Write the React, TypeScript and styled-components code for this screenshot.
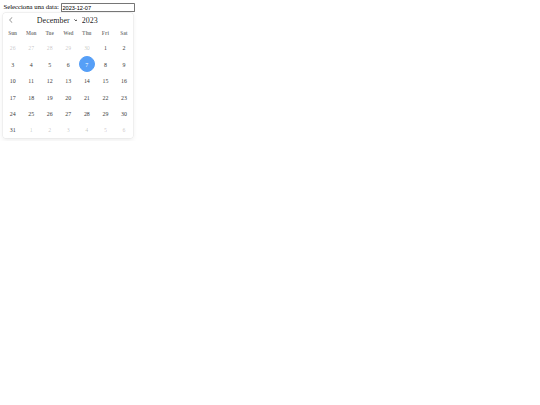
import React from "react";
import styled, { createGlobalStyle, css } from "styled-components";

const GlobalStyle = createGlobalStyle`
  body {
    margin: 0;
    background: #fff;
    color: #000;
  }
`;

// The picker is drawn at its natural size and shrunk as a whole
const Page = styled.div`
  zoom: 0.421875;
  padding: 8px;
  font-family: "Liberation Serif", "Times New Roman", serif;
  font-size: 16px;
`;

const Field = styled.label`
  display: inline;
`;

const DateInput = styled.input`
  font-family: "Liberation Sans", Arial, sans-serif;
  font-size: 13.333px;
  padding: 1px 2px;
  border: 1px solid #767676;
  border-radius: 2px;
  width: 168px;
`;

const Calendar = styled.div`
  display: block;
  margin-top: 2px;
  width: 307.875px;
  box-sizing: border-box;
  background: #fff;
  border-radius: 5px;
  box-shadow: 1px 0 0 #e6e6e6, -1px 0 0 #e6e6e6, 0 1px 0 #e6e6e6,
    0 -1px 0 #e6e6e6, 0 3px 13px rgba(0, 0, 0, 0.08);
  font-size: 14px;
  line-height: 24px;
  text-align: center;
`;

const MonthBar = styled.div`
  display: grid;
  grid-template-columns: 34px 1fr 34px;
  height: 34px;
  line-height: 1;
  color: rgba(0, 0, 0, 0.9);
  fill: rgba(0, 0, 0, 0.9);
`;

const Arrow = styled.span`
  display: flex;
  align-items: flex-start;
  padding: 10px;
  height: 34px;
  box-sizing: border-box;
  cursor: pointer;

  svg {
    width: 14px;
    height: 14px;
  }
`;

const CurrentMonth = styled.div`
  display: flex;
  justify-content: center;
  align-items: baseline;
  font-size: 135%;
  font-weight: 300;
  padding-top: 7.48px;
  line-height: 1;
  height: 34px;
  box-sizing: border-box;
`;

const MonthSelect = styled.select`
  appearance: none;
  background: transparent;
  border: none;
  border-radius: 0;
  color: inherit;
  font-family: inherit;
  font-size: inherit;
  font-weight: 300;
  line-height: inherit;
  margin: -1px 0 0 0;
  outline: none;
  padding: 0 0 0 0.5ch;
`;

const Caret = styled.svg`
  width: 9px;
  height: 6px;
  margin: 6px 6px 0 4px;
  align-self: flex-start;
  fill: none;
  stroke: rgba(0, 0, 0, 0.85);
  stroke-width: 2;
`;

const YearWrap = styled.div`
  display: inline-block;
  width: 5.5ch;
`;

const YearInput = styled.input`
  background: transparent;
  box-sizing: border-box;
  color: inherit;
  padding: 0 0 0 0.5ch;
  margin: 0;
  width: 100%;
  font-size: inherit;
  font-family: inherit;
  font-weight: 300;
  line-height: inherit;
  border: 0;
  outline: none;
`;

const Weekdays = styled.div`
  display: flex;
  align-items: center;
  height: 28px;
`;

const Weekday = styled.span`
  flex: 1;
  font-size: 90%;
  line-height: 1;
  font-weight: bolder;
  color: rgba(0, 0, 0, 0.54);
`;

const DayGrid = styled.div`
  display: flex;
  flex-wrap: wrap;
  justify-content: space-around;
  width: 307.875px;
`;

const Day = styled.span<{ $muted?: boolean; $selected?: boolean }>`
  box-sizing: border-box;
  flex-basis: 14.2857143%;
  max-width: 39px;
  height: 39px;
  line-height: 39px;
  border: 1px solid transparent;
  border-radius: 150px;
  color: #393939;
  font-weight: 400;
  text-align: center;
  cursor: pointer;

  ${(p) =>
    p.$muted &&
    css`
      color: rgba(57, 57, 57, 0.3);
    `}

  ${(p) =>
    p.$selected &&
    css`
      background: #569ff7;
      border-color: #569ff7;
      color: #fff;
    `}
`;

const weekdays = ["Sun", "Mon", "Tue", "Wed", "Thu", "Fri", "Sat"];

const months = [
  "January",
  "February",
  "March",
  "April",
  "May",
  "June",
  "July",
  "August",
  "September",
  "October",
  "November",
  "December",
];

type Cell = { n: number; muted?: boolean };

const cells: Cell[] = [
  ...[26, 27, 28, 29, 30].map((n) => ({ n, muted: true })),
  ...Array.from({ length: 31 }, (_, i) => ({ n: i + 1 })),
  ...[1, 2, 3, 4, 5, 6].map((n) => ({ n, muted: true })),
];

export default function App() {
  return (
    <>
      <GlobalStyle />
      <Page>
        <Field htmlFor="data">Selecciona una data: </Field>
        <DateInput id="data" type="text" readOnly value="2023-12-07" />
        <Calendar>
          <MonthBar>
            <Arrow>
              <svg viewBox="0 0 17 17">
                <path d="M5.207 8.471l7.146 7.147-0.707 0.707-7.853-7.854 7.854-7.853 0.707 0.707-7.147 7.146z" />
              </svg>
            </Arrow>
            <CurrentMonth>
              <MonthSelect defaultValue="11" aria-label="Month">
                {months.map((m, i) => (
                  <option key={m} value={i}>
                    {m}
                  </option>
                ))}
              </MonthSelect>
              <Caret viewBox="0 0 9 6">
                <polyline points="1,1 4.5,4.5 8,1" />
              </Caret>
              <YearWrap>
                <YearInput type="text" readOnly value="2023" aria-label="Year" />
              </YearWrap>
            </CurrentMonth>
            <span />
          </MonthBar>
          <Weekdays>
            {weekdays.map((d) => (
              <Weekday key={d}>{d}</Weekday>
            ))}
          </Weekdays>
          <DayGrid>
            {cells.map((c, i) => (
              <Day key={i} $muted={c.muted} $selected={!c.muted && c.n === 7}>
                {c.n}
              </Day>
            ))}
          </DayGrid>
        </Calendar>
      </Page>
    </>
  );
}
